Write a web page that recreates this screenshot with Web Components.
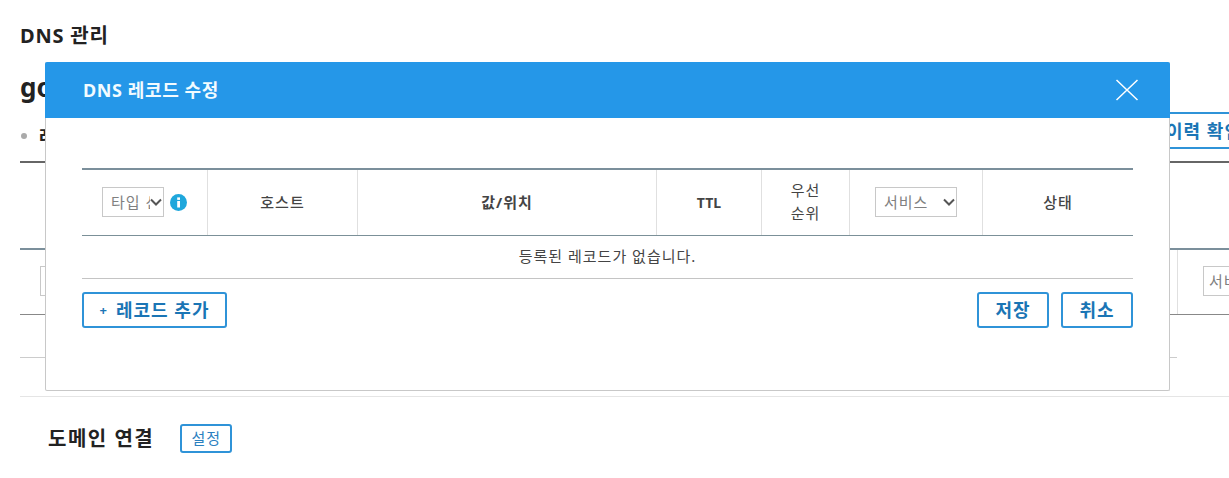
<!DOCTYPE html>
<html lang="ko">
<head>
<meta charset="utf-8">
<title>DNS 관리</title>
<style>
  html, body { margin: 0; height: 100%; overflow: hidden; background: #fff; }
  body { font-family: "Noto Sans", "Noto Sans CJK KR", sans-serif; color: #222; }
</style>
</head>
<body>
<dns-page>
  <dns-modal heading="DNS 레코드 수정">
    <record-table></record-table>
    <outline-button slot="left" large style="width:145px"><span style="font-size:13px;margin-right:8px">+</span>레코드 추가</outline-button>
    <outline-button slot="right" large style="width:72px">저장</outline-button>
    <outline-button slot="right" large style="width:72px">취소</outline-button>
  </dns-modal>
</dns-page>

<script>
const FONT = '"Noto Sans", "Noto Sans CJK KR", sans-serif';

class OutlineButton extends HTMLElement {
  constructor() {
    super();
    this.attachShadow({ mode: 'open' });
    this.shadowRoot.innerHTML = `
      <style>
        :host {
          display: inline-flex;
          align-items: center;
          justify-content: center;
          box-sizing: border-box;
          height: 29px;
          width: 52px;
          border: 2px solid #2f93d8;
          border-radius: 3px;
          background: #fff;
          color: #2b80bf;
          font: 400 15px/1 ${FONT};
          letter-spacing: 1px;
          white-space: nowrap;
        }
        :host([large]) {
          height: 36px;
          color: #1a75b5;
          font-size: 18px;
          font-weight: 700;
        }
      </style>
      <slot></slot>
    `;
  }
}

class RecordSelect extends HTMLElement {
  constructor() {
    super();
    this.attachShadow({ mode: 'open' });
    this.shadowRoot.innerHTML = `
      <style>
        :host {
          display: inline-flex;
          align-items: center;
          box-sizing: border-box;
          height: 30px;
          padding-left: 8px;
          border: 1px solid #c8c8c8;
          background: #fff;
          color: #808080;
          font: 400 15px/1 ${FONT};
          letter-spacing: 1px;
          text-align: left;
          overflow: hidden;
        }
        .label { flex: 1; min-width: 0; overflow: hidden; white-space: nowrap; }
        svg { flex: none; width: 12px; height: 8px; margin: 0 1px 0 0; }
      </style>
      <span class="label"><slot></slot></span>
      <svg viewBox="0 0 12 8" aria-hidden="true"><path d="M1 1.5l5 5 5-5" fill="none" stroke="#555" stroke-width="2"/></svg>
    `;
  }
}

class RecordTable extends HTMLElement {
  constructor() {
    super();
    this.attachShadow({ mode: 'open' });
    this.shadowRoot.innerHTML = `
      <style>
        :host { display: block; color: #444; font: 500 15px/23px ${FONT}; letter-spacing: 1px; }
        .head {
          display: grid;
          grid-template-columns: 125px 150px 299px 105px 88px 133px 151px;
          height: 68px;
          box-sizing: border-box;
          border-top: 2px solid #7b8f9b;
          border-bottom: 1px solid #7b9098;
        }
        .head > div {
          display: flex;
          align-items: center;
          justify-content: center;
          padding-bottom: 1px;
          text-align: center;
          border-left: 1px solid #e0e0e0;
        }
        .head > div:first-child { border-left: 0; justify-content: flex-start; padding-left: 20px; }
        .bold { font-weight: 700; }
        .thin { font-weight: 400; }
        .latin { letter-spacing: 0; font-size: 14px; }
        record-select.type { width: 62px; }
        record-select.service { width: 82px; }
        svg { flex: none; width: 17px; height: 17px; margin-left: 6px; }
        .empty {
          height: 43px;
          box-sizing: border-box;
          padding-bottom: 1px;
          border-bottom: 1px solid #c4c4c4;
          display: flex;
          align-items: center;
          justify-content: center;
          font-weight: 400;
          color: #444;
        }
      </style>
      <div class="head">
        <div>
          <record-select class="type">타입 선택</record-select>
          <svg viewBox="0 0 17 17" aria-hidden="true">
            <circle cx="8.5" cy="8.5" r="8.5" fill="#1fa7dc"/>
            <rect x="7.2" y="7" width="2.8" height="6.5" fill="#fff"/>
            <rect x="7.2" y="3.4" width="2.8" height="2.5" fill="#fff"/>
          </svg>
        </div>
        <div>호스트</div>
        <div class="bold">값/위치</div>
        <div class="bold latin">TTL</div>
        <div class="thin">우선<br>순위</div>
        <div><record-select class="service">서비스</record-select></div>
        <div>상태</div>
      </div>
      <div class="empty">등록된 레코드가 없습니다.</div>
    `;
  }
}

class DnsModal extends HTMLElement {
  constructor() {
    super();
    this.attachShadow({ mode: 'open' });
    this.shadowRoot.innerHTML = `
      <style>
        /* 모달은 배경 페이지 위에 겹쳐서 표시 */
        :host {
          position: absolute;
          left: 45px;
          top: 62px;
          width: 1125px;
          height: 329px;
          box-sizing: border-box;
          border: 1px solid #c8c8c8;
          border-top: 0;
          border-radius: 2px;
          background: #fff;
        }
        header {
          display: flex;
          align-items: center;
          justify-content: space-between;
          height: 56px;
          margin: 0 -1px;
          padding: 0 31px 0 38px;
          background: #2597e8;
          border-radius: 2px 2px 0 0;
          color: #f2fbff;
          font: 700 18px/1 ${FONT};
          letter-spacing: .6px;
        }
        header svg { width: 24px; height: 22px; }
        .body { padding: 50px 36px 0; }
        .actions {
          display: flex;
          justify-content: space-between;
          margin-top: 13px;
        }
        .right { display: flex; gap: 12px; }
      </style>
      <header>
        <span id="heading"></span>
        <svg viewBox="0 0 24 22" aria-hidden="true"><path d="M1.5 1l21 20M22.5 1l-21 20" fill="none" stroke="#fff" stroke-width="1.5"/></svg>
      </header>
      <div class="body">
        <slot></slot>
        <div class="actions">
          <div><slot name="left"></slot></div>
          <div class="right"><slot name="right"></slot></div>
        </div>
      </div>
    `;
  }

  connectedCallback() {
    this.shadowRoot.getElementById('heading').textContent = this.getAttribute('heading') || '';
  }
}

class DnsPage extends HTMLElement {
  constructor() {
    super();
    this.attachShadow({ mode: 'open' });
    this.shadowRoot.innerHTML = `
      <style>
        :host { display: block; width: 1256px; color: #222; font: 400 14px/1.4 ${FONT}; }
        .wrap { padding: 22px 0 0 20px; }
        h2 { margin: 0; height: 26px; font-size: 20px; line-height: 28px; font-weight: 700; letter-spacing: .8px; }
        h1 { margin: 22px 0 0; height: 34px; font-size: 26px; line-height: 34px; font-weight: 700; }
        .tabs {
          display: flex;
          align-items: flex-end;
          justify-content: space-between;
          height: 51px;
          margin-top: 8px;
          box-sizing: border-box;
          padding-bottom: 12px;
          border-bottom: 2px solid #666;
        }
        .tab { display: flex; align-items: center; gap: 12px; font-size: 18px; font-weight: 700; }
        .tab i { width: 6px; height: 6px; margin-left: 1px; border-radius: 50%; background: #aaa; }
        .tabs outline-button { height: 37px; width: 104px; }
        .grid { margin-top: 85px; border-top: 2px solid #7b8f9b; }
        .row {
          display: flex;
          justify-content: space-between;
          height: 65px;
          box-sizing: border-box;
          border-bottom: 1px solid #888;
        }
        .cell { display: flex; align-items: flex-start; padding: 16px 0 0 20px; }
        .cell.last { width: 79px; border-left: 1px solid #e0e0e0; padding-left: 25px; box-sizing: border-box; }
        .cell record-select { width: 60px; }
        .cell.last record-select { padding-left: 5px; }
        .empty-row { height: 43px; width: 1157px; box-sizing: border-box; border-bottom: 1px solid #ccc; }
        hr { margin: 38px 0 0; border: 0; border-top: 1px solid #e5e5e5; }
        .domain { display: flex; align-items: center; gap: 26px; height: 29px; margin: 27px 0 0 28px; }
        .domain h3 { margin: 0; font-size: 20px; font-weight: 700; line-height: 29px; letter-spacing: 1.5px; }
      </style>
      <div class="wrap">
        <h2>DNS 관리</h2>
        <h1>godomain.kr</h1>
        <div class="tabs">
          <div class="tab"><i></i>레코드 목록</div>
          <outline-button large>이력 확인</outline-button>
        </div>
        <div class="grid">
          <div class="row">
            <div class="cell"><record-select>타입</record-select></div>
            <div class="cell last"><record-select>서비스</record-select></div>
          </div>
          <div class="empty-row"></div>
        </div>
        <hr>
        <div class="domain">
          <h3>도메인 연결</h3>
          <outline-button>설정</outline-button>
        </div>
      </div>
      <slot></slot>
    `;
  }
}

customElements.define('outline-button', OutlineButton);
customElements.define('record-select', RecordSelect);
customElements.define('record-table', RecordTable);
customElements.define('dns-modal', DnsModal);
customElements.define('dns-page', DnsPage);
</script>
</body>
</html>
